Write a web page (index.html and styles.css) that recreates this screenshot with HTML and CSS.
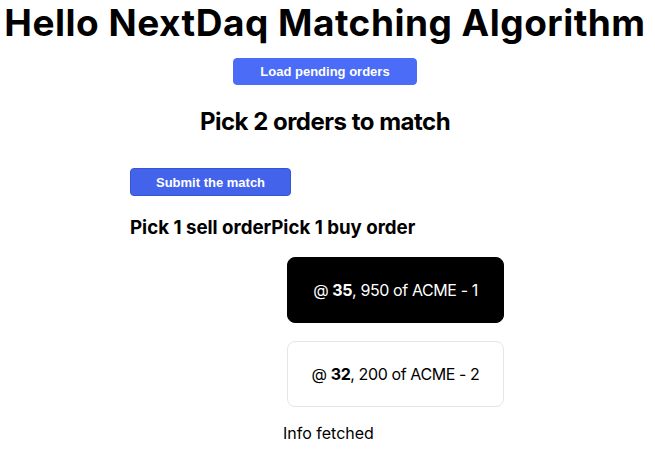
FILE: index.html
```html
<!DOCTYPE html>
<html lang="en">
<head>
<meta charset="utf-8">
<title>NextDaq</title>
<link rel="stylesheet" href="styles.css">
</head>
<body>
<main class="page">
<h1 class="title">Hello NextDaq Matching Algorithm</h1>
<div class="center">
  <button class="btn btn-load">Load pending orders</button>
</div>
<h2 class="subtitle">Pick 2 orders to match</h2>
<section class="matcher">
  <button class="btn btn-submit">Submit the match</button>
  <div class="columns">
    <h3 class="col-title">Pick 1 sell order</h3>
    <h3 class="col-title">Pick 1 buy order</h3>
  </div>
  <div class="orders">
    <div class="card card-selected"><span>@ <b>35</b>, 950 of ACME - 1</span></div>
    <div class="card"><span>@ <b>32</b>, 200 of ACME - 2</span></div>
  </div>
  <p class="status">Info fetched</p>
</section>
</main>
</body>
</html>
```
FILE: styles.css
```css
body {
  margin: 0;
  font-family: Inter, "Liberation Sans", sans-serif;
  color: #000;
  background: #fff;
}
.page {
  display: block;
  padding-right: 5px;
}
.title {
  margin: 0;
  text-align: center;
  font-size: 37px;
  letter-spacing: 0.5px;
  font-weight: 700;
  line-height: 45px;
}
.center {
  display: flex;
  justify-content: center;
  margin-top: 13px;
}
.btn {
  font-family: "Liberation Sans", Arial, sans-serif;
  font-weight: 700;
  font-size: 13px;
  color: #fff;
  border-radius: 4px;
  padding: 0 25px;
  height: 27px;
  cursor: pointer;
}
.btn-load {
  background: #4a6cf6;
  border: 1px solid #4a6cf6;
  padding: 0 26px;
}
.btn-submit {
  background: #4364ea;
  border: 1px solid #3554d1;
  height: 28px;
}
.subtitle {
  margin: 22px 0 0;
  text-align: center;
  font-size: 24px;
  letter-spacing: -0.5px;
  font-weight: 700;
  line-height: 30px;
}
.matcher {
  padding-left: 130px;
  margin-top: 31px;
}
.columns {
  display: flex;
  margin-top: 20px;
}
.col-title {
  margin: 0;
  font-size: 18.7px;
  font-weight: 700;
  line-height: 23px;
}
.orders {
  margin-left: 157px;
  margin-top: 18px;
  display: flex;
  flex-direction: column;
  gap: 18px;
  width: 217px;
}
.card {
  height: 66px;
  box-sizing: border-box;
  border: 1px solid #e6e6e6;
  border-radius: 8px;
  display: flex;
  align-items: center;
  justify-content: center;
  font-size: 16px;
  letter-spacing: -0.4px;
}
.card-selected {
  background: #000;
  color: #fff;
  border-color: #000;
}
.status {
  margin: 16px 0 0 153px;
  font-size: 16px;
  line-height: 20px;
}
```
